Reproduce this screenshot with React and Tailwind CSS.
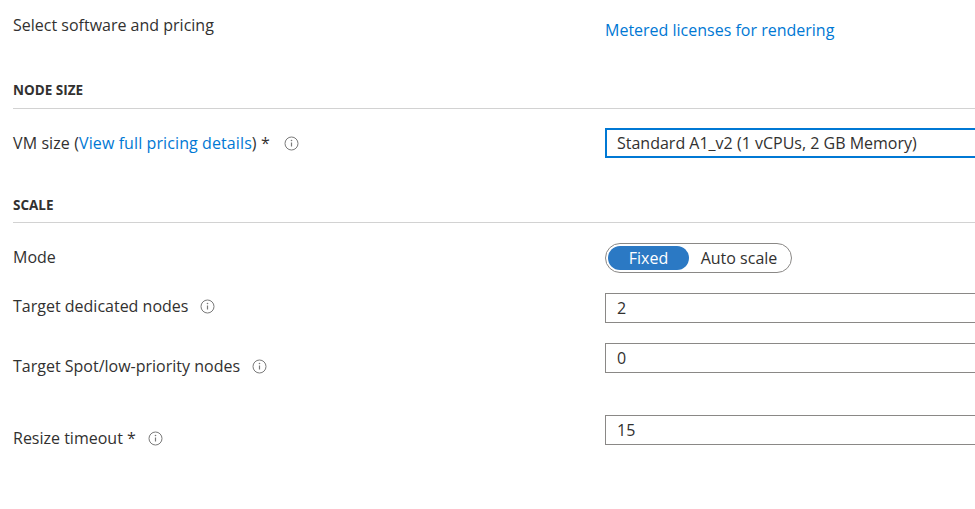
import { useState } from 'react';

function InfoIcon() {
    return (
        <svg width="15" height="15" viewBox="0 0 15 15" className="shrink-0">
            <circle cx="7.5" cy="7.5" r="6.5" fill="none" stroke="#7a7a7a" strokeWidth="1" />
            <line x1="7.5" y1="6.5" x2="7.5" y2="10.5" stroke="#7a7a7a" strokeWidth="1.2" />
            <circle cx="7.5" cy="4.5" r="0.8" fill="#7a7a7a" />
        </svg>
    );
}

function SectionHeading({ children, className = '' }) {
    return (
        <div className={`ml-[13px] border-b border-[#d2d2d2] ${className}`}>
            <p className="text-[13.5px] leading-[18px] font-bold text-[#323130]">{children}</p>
        </div>
    );
}

function TextBox({ value }) {
    return (
        <div className="w-[400px] shrink-0 h-[30px] border border-[#8a8886] flex items-center pl-[11px] text-[16px] text-[#323130]">
            {value}
        </div>
    );
}

export default function App() {
    const [mode, setMode] = useState('fixed');

    return (
        <div
            className="w-[975px] h-[509px] overflow-hidden bg-white text-[#323130]"
            style={{ fontFamily: '"Open Sans", "Noto Sans", sans-serif' }}
        >
            {/* Software row */}
            <div className="flex h-[60px]">
                <div className="w-[605px] shrink-0 pl-[13px] pt-[14px] text-[16px] leading-[22px]">Select software and pricing</div>
                <div className="pt-[19px] text-[16px] leading-[22px] text-[#0078d4]">Metered licenses for rendering</div>
            </div>

            <SectionHeading className="mt-[21px] pb-[9px]">NODE SIZE</SectionHeading>

            {/* VM size */}
            <div className="flex items-center mt-[19px]">
                <div className="w-[605px] shrink-0 pl-[13px] flex items-center gap-[14px] text-[16px]">
                    <span className="tracking-[0.1px]">
                        VM size (<span className="text-[#0078d4]">View full pricing details</span>) *
                    </span>
                    <InfoIcon />
                </div>
                <div className="w-[400px] shrink-0 h-[30px] border-2 border-[#0078d4] flex items-center pl-[10px] text-[16px]">
                    Standard A1_v2 (1 vCPUs, 2 GB Memory)
                </div>
            </div>

            <SectionHeading className="mt-[38px] pb-[8px]">SCALE</SectionHeading>

            {/* Mode */}
            <div className="flex items-center mt-[20px]">
                <div className="w-[605px] shrink-0 pl-[13px] text-[16px] leading-[22px] -mt-[2px]">Mode</div>
                <div className="w-[187px] h-[30px] rounded-full border border-[#8a8886] flex items-center px-[2px] text-[16px]">
                    <button
                        onClick={() => setMode('fixed')}
                        className={`w-[81px] h-[24px] rounded-full ${mode === 'fixed' ? 'bg-[#2b79c4] text-white' : ''}`}
                    >
                        Fixed
                    </button>
                    <button
                        onClick={() => setMode('auto')}
                        className={`flex-1 h-[24px] rounded-full ${mode === 'auto' ? 'bg-[#2b79c4] text-white' : ''}`}
                    >
                        Auto scale
                    </button>
                </div>
            </div>

            {/* Target dedicated nodes */}
            <div className="flex items-start mt-[20px]">
                <div className="w-[605px] shrink-0 pl-[13px] pt-[2px] flex items-center gap-[12px] text-[16px] leading-[22px]">
                    Target dedicated nodes
                    <InfoIcon />
                </div>
                <TextBox value="2" />
            </div>

            {/* Target spot nodes */}
            <div className="flex items-start mt-[20px]">
                <div className="w-[605px] shrink-0 pl-[13px] pt-[12px] flex items-center gap-[12px] text-[16px] leading-[22px]">
                    Target Spot/low-priority nodes
                    <InfoIcon />
                </div>
                <TextBox value="0" />
            </div>

            {/* Resize timeout */}
            <div className="flex items-start mt-[38px]">
                <div className="w-[605px] shrink-0 pl-[13px] pt-[12px] flex items-center gap-[12px] text-[16px] leading-[22px]">
                    Resize timeout *
                    <InfoIcon />
                </div>
                <TextBox value="15" />
            </div>
        </div>
    );
}
